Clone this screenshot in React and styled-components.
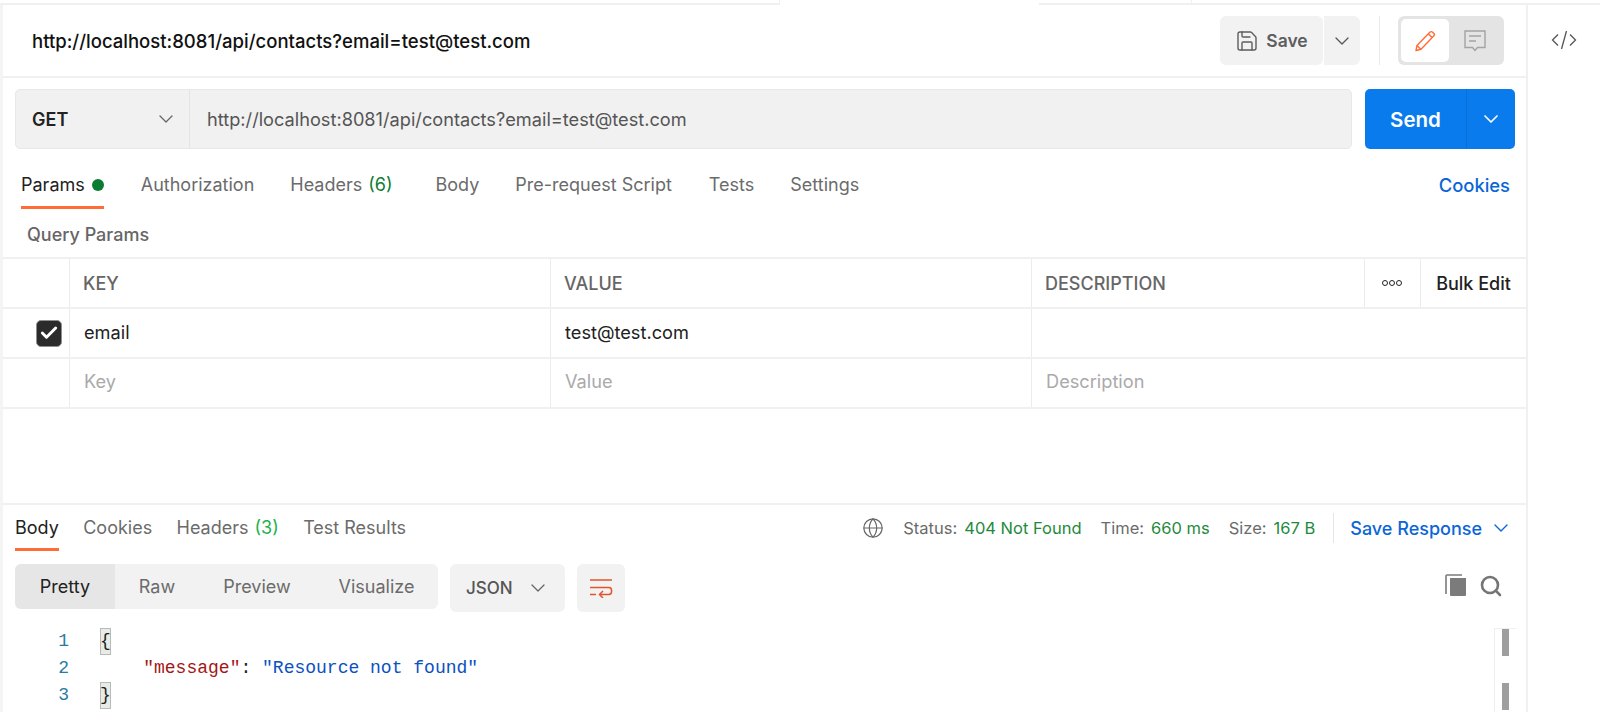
import React from 'react'
import styled, { createGlobalStyle } from 'styled-components'
import { ChevronDown, Globe, Search, Save, Check } from 'lucide-react'

const Global = createGlobalStyle`
  html, body { margin: 0; padding: 0; background: #fff; }
  body { font-family: Inter, "Noto Sans", sans-serif; color: #212121; }
  * { box-sizing: border-box; }
`

const line = '#f0f0f0'

const Page = styled.div`
  width: 1600px;
  height: 712px;
  display: flex;
  flex-direction: column;
  overflow: hidden;
`

const TabStrip = styled.div`
  height: 5px;
  display: flex;
  flex: none;
`

const StripPart = styled.div`
  width: ${(p) => p.$w}px;
  flex: ${(p) => (p.$w ? 'none' : 1)};
  border-bottom: ${(p) => (p.$open ? 'none' : `2px solid ${line}`)};
  border-right: ${(p) => (p.$edge ? `1px solid ${line}` : 'none')};
`

const Workspace = styled.div`
  flex: 1;
  display: flex;
  min-height: 0;
`

const Main = styled.div`
  width: 1528px;
  flex: none;
  display: flex;
  flex-direction: column;
  border-left: 3px solid #f4f4f4;
  border-right: 2px solid ${line};
`

const Side = styled.div`
  flex: 1;
  display: flex;
  justify-content: center;
  padding-top: 25px;
  color: #555;
`

const TitleRow = styled.div`
  height: 73px;
  flex: none;
  display: flex;
  align-items: center;
  padding: 0 22px 0 29px;
  border-bottom: 2px solid ${line};
`

const Title = styled.div`
  flex: 1;
  font-size: 18.55px;
  font-weight: 500;
  color: #111;
`

const SaveButton = styled.div`
  width: 103px;
  height: 49px;
  display: flex;
  align-items: center;
  justify-content: center;
  gap: 7px;
  background: #f2f2f2;
  border-radius: 6px;
  font-size: 17.5px;
  font-weight: 600;
  color: #5e5e5e;
`

const SaveMenu = styled.div`
  width: 36px;
  height: 49px;
  margin-left: 1px;
  display: flex;
  align-items: center;
  justify-content: center;
  background: #f2f2f2;
  border-radius: 0 6px 6px 0;
  color: #555;
`

const ToolDivider = styled.div`
  width: 1px;
  height: 49px;
  margin: 0 18px 0 19px;
  background: #ebebeb;
`

const Toggle = styled.div`
  width: 106px;
  height: 49px;
  padding: 3px;
  display: flex;
  background: #e4e4e4;
  border-radius: 6px;
`

const ToggleItem = styled.div`
  width: ${(p) => (p.$on ? 48 : 52)}px;
  display: flex;
  align-items: center;
  justify-content: center;
  background: ${(p) => (p.$on ? '#fff' : 'transparent')};
  border-radius: 5px;
`

const RequestRow = styled.div`
  display: flex;
  padding: 11px 11px 0 12px;
  flex: none;
`

const UrlBox = styled.div`
  width: 1337px;
  height: 60px;
  flex: none;
  display: flex;
  background: #f1f1f1;
  border: 1px solid #e8e8e8;
  border-radius: 5px;
`

const Method = styled.div`
  width: 174px;
  padding: 0 11px 0 16px;
  display: flex;
  align-items: center;
  justify-content: space-between;
  border-right: 1px solid #e4e4e4;
  font-size: 18px;
  font-weight: 600;
  color: #222;
`

const UrlText = styled.div`
  padding-left: 17px;
  display: flex;
  align-items: center;
  font-size: 18.2px;
  color: #555;
`

const SendButton = styled.div`
  width: 150px;
  height: 60px;
  flex: none;
  margin-left: 13px;
  display: flex;
  background: #097bed;
  border-radius: 5px;
  color: #fff;
`

const SendLabel = styled.div`
  width: 102px;
  display: flex;
  align-items: center;
  justify-content: center;
  font-size: 20.5px;
  font-weight: 600;
  border-right: 1px solid #0a6fd4;
`

const SendMenu = styled.div`
  flex: 1;
  display: flex;
  align-items: center;
  justify-content: center;
`

const RequestTabs = styled.div`
  height: 58px;
  flex: none;
  display: flex;
  align-items: flex-start;
  padding: 21px 16px 0 18px;
`

const RequestTab = styled.div`
  position: relative;
  margin-right: ${(p) => p.$gap}px;
  height: 39px;
  display: flex;
  align-items: flex-start;
  font-size: 18px;
  line-height: 30px;
  color: ${(p) => (p.$active ? '#212121' : '#6b6b6b')};
  &::after {
    content: '';
    display: ${(p) => (p.$active ? 'block' : 'none')};
    position: absolute;
    left: 0;
    right: 0;
    bottom: 0;
    height: 3px;
    background: #ff6c37;
  }
`

const GreenDot = styled.span`
  width: 12px;
  height: 12px;
  margin: 9px 0 0 7px;
  border-radius: 50%;
  background: #0a7d33;
`

const Count = styled.span`
  margin-left: 6px;
  color: ${(p) => p.$color};
`

const CookiesLink = styled.div`
  margin-left: auto;
  line-height: 30px;
  font-size: 18.4px;
  font-weight: 500;
  color: #0a66d8;
`

const SectionLabel = styled.div`
  height: 50px;
  flex: none;
  padding: 17px 0 0 24px;
  font-size: 18px;
  font-weight: 500;
  color: #666;
`

const Row = styled.div`
  height: 50px;
  flex: none;
  display: grid;
  grid-template-columns: 67px 481px 481px 1fr;
  border-top: 2px solid ${line};
`

const LastLine = styled.div`
  height: 2px;
  flex: none;
  background: ${line};
`

const Cell = styled.div`
  display: flex;
  align-items: center;
  padding-left: ${(p) => p.$pad ?? 13}px;
  padding-bottom: ${(p) => p.$lift ?? 0}px;
  border-right: ${(p) => (p.$last ? 'none' : `1px solid #ececec`)};
  font-size: ${(p) => (p.$head ? 18 : 18.2)}px;
  font-weight: ${(p) => (p.$head ? 500 : 400)};
  color: ${(p) => (p.$head ? '#666' : p.$ghost ? '#aaa' : '#212121')};
`

const DescCell = styled.div`
  display: grid;
  grid-template-columns: 333px 56px 1fr;
`

const CheckBox = styled.span`
  width: 26px;
  height: 27px;
  display: flex;
  align-items: center;
  justify-content: center;
  background: #2b2b2b;
  border: 1px solid #8f8f8f;
  border-radius: 5px;
  color: #fff;
`

const Dots = styled.div`
  display: flex;
  gap: 1px;
  justify-content: center;
  align-items: center;
  padding-right: 2px;
  border-right: 1px solid #ececec;
`

const Dot = styled.span`
  width: 6px;
  height: 6px;
  border: 1.5px solid #222;
  border-radius: 50%;
`

const BulkEdit = styled.div`
  display: flex;
  align-items: center;
  justify-content: center;
  font-size: 18px;
  font-weight: 500;
  white-space: nowrap;
  color: #212121;
`

const Spacer = styled.div`
  height: 94px;
  flex: none;
`

const Response = styled.div`
  flex: 1;
  display: flex;
  flex-direction: column;
  border-top: 2px solid ${line};
  min-height: 0;
`

const ResponseBar = styled.div`
  height: 46px;
  flex: none;
  display: flex;
  align-items: flex-start;
  padding: 10px 13px 0 12px;
`

const ResponseTab = styled.div`
  position: relative;
  height: 36px;
  margin-right: 24.4px;
  font-size: 18px;
  line-height: 26px;
  color: ${(p) => (p.$active ? '#212121' : '#6b6b6b')};
  &::after {
    content: '';
    display: ${(p) => (p.$active ? 'block' : 'none')};
    position: absolute;
    left: 0;
    right: 0;
    bottom: 0;
    height: 3px;
    background: #ff6c37;
  }
`

const Stats = styled.div`
  margin-left: auto;
  margin-top: -2px;
  display: flex;
  align-items: center;
  height: 30px;
  font-size: 16.5px;
  color: #6b6b6b;
`

const Stat = styled.span`
  margin-left: ${(p) => p.$gap}px;
  b {
    font-weight: 400;
    color: #1f8a3d;
    margin-left: 7px;
  }
`

const StatDivider = styled.div`
  width: 1px;
  height: 30px;
  margin: 0 16px 0 18px;
  background: #e6e6e6;
`

const SaveResponse = styled.div`
  display: flex;
  align-items: center;
  gap: 7px;
  font-size: 18px;
  font-weight: 500;
  color: #0a66d8;
`

const ResponseTools = styled.div`
  height: 50px;
  flex: none;
  margin-top: 13px;
  display: flex;
  align-items: flex-start;
  padding: 0 0 0 12px;
`

const Segmented = styled.div`
  width: 423px;
  height: 45px;
  display: flex;
  background: #f2f2f2;
  border-radius: 6px;
  overflow: hidden;
`

const Segment = styled.div`
  width: ${(p) => p.$w}px;
  display: flex;
  align-items: center;
  justify-content: center;
  font-size: 18px;
  background: ${(p) => (p.$active ? '#e6e6e6' : 'transparent')};
  color: ${(p) => (p.$active ? '#212121' : '#6b6b6b')};
`

const FormatSelect = styled.div`
  width: 115px;
  height: 48px;
  margin-left: 12px;
  padding: 0 15px 0 16px;
  display: flex;
  align-items: center;
  justify-content: space-between;
  background: #f2f2f2;
  border-radius: 6px;
  font-size: 17px;
  font-weight: 500;
  color: #555;
`

const WrapButton = styled.div`
  width: 48px;
  height: 48px;
  margin-left: 12px;
  display: flex;
  align-items: center;
  justify-content: center;
  background: #f2f2f2;
  border-radius: 6px;
`

const ToolIcons = styled.div`
  margin-left: auto;
  padding: 10px 23px 0 0;
  display: flex;
  gap: 12px;
  color: #757575;
`

const CodeArea = styled.div`
  flex: 1;
  display: flex;
  position: relative;
  padding-top: 14px;
  font-family: "Liberation Mono", "DejaVu Sans Mono", monospace;
  font-size: 18px;
  line-height: 27px;
`

const Numbers = styled.div`
  width: 71px;
  text-align: right;
  color: #2b7a9f;
  span {
    display: block;
    padding-right: 5px;
  }
`

const Lines = styled.div`
  padding-left: 26px;
`

const CodeLine = styled.div`
  height: 27px;
  white-space: pre;
`

const Brace = styled.span`
  display: inline-block;
  width: 11px;
  height: 27px;
  background: #e8ece6;
  outline: 1px solid #b9b9b9;
  outline-offset: -1px;
  color: #222;
`

const Key = styled.span`
  color: #a31515;
`

const Str = styled.span`
  color: #0b51c1;
`

const Scroll = styled.div`
  position: absolute;
  top: 14px;
  right: 10px;
  width: 22px;
  bottom: 0;
  border-left: 1px solid #efefef;
  border-top: 1px solid #efefef;
`

const ScrollMark = styled.div`
  position: absolute;
  right: 7px;
  top: ${(p) => p.$top}px;
  width: 7px;
  height: 27px;
  background: #9e9e9e;
`

const PenIcon = () => (
  <svg width="24" height="24" viewBox="0 0 24 24" fill="none" stroke="#ff6c37" strokeWidth="1.4" strokeLinejoin="round">
    <path d="M3 21.5l1-5L16.8 3.2c.8-.8 2-.8 2.8 0l1.1 1.1c.8.8.8 2 0 2.8L8 20.3z" />
    <path d="M15.5 5l3.6 3.6" />
    <path d="M4 16.5l3.8 3.8" />
  </svg>
)

const NoteIcon = () => (
  <svg width="22" height="22" viewBox="0 0 22 22" fill="none" stroke="#a3a3a3" strokeWidth="1.4">
    <path d="M1 1h20v16.5h-7.5L11 20.5l-2.5-3H1z" />
    <path d="M5 6h12M5 11h7" />
  </svg>
)

const CodeIcon = () => (
  <svg width="26" height="20" viewBox="0 0 26 20" fill="none" stroke="#555" strokeWidth="1.3">
    <path d="M7 4.5L1.5 10 7 15.5" />
    <path d="M19 4.5L24.5 10 19 15.5" />
    <path d="M15.5 1L10.5 19" />
  </svg>
)

const WrapIcon = () => (
  <svg width="24" height="20" viewBox="0 0 24 20" fill="none" stroke="#e2542c" strokeWidth="1.5">
    <path d="M1 2h22" />
    <path d="M1 9.5h19c3.5 0 3.5 7 0 7h-9" />
    <path d="M14 13l-3.5 3.5L14 20" />
    <path d="M1 16.5h6" />
  </svg>
)

const CopyIcon = () => (
  <svg width="22" height="22" viewBox="0 0 22 22">
    <path d="M5 4h16v17a1 1 0 0 1-1 1H6a1 1 0 0 1-1-1z" fill="#7b7b7b" />
    <path d="M1 20V2a1 1 0 0 1 1-1h15" fill="none" stroke="#7b7b7b" strokeWidth="1.6" />
  </svg>
)

const App = () => (
  <>
    <Global />
    <Page>
      <TabStrip>
        <StripPart $w={780} $edge />
        <StripPart $w={259} $open />
        <StripPart $w={153} $edge />
        <StripPart />
      </TabStrip>
      <Workspace>
        <Main>
          <TitleRow>
            <Title>http://localhost:8081/api/contacts?email=test@test.com</Title>
            <SaveButton>
              <Save size={24} strokeWidth={1.4} />
              Save
            </SaveButton>
            <SaveMenu>
              <ChevronDown size={24} strokeWidth={1.3} />
            </SaveMenu>
            <ToolDivider />
            <Toggle>
              <ToggleItem $on>
                <PenIcon />
              </ToggleItem>
              <ToggleItem>
                <NoteIcon />
              </ToggleItem>
            </Toggle>
          </TitleRow>
          <RequestRow>
            <UrlBox>
              <Method>
                GET
                <ChevronDown size={24} strokeWidth={1.3} color="#666" />
              </Method>
              <UrlText>http://localhost:8081/api/contacts?email=test@test.com</UrlText>
            </UrlBox>
            <SendButton>
              <SendLabel>Send</SendLabel>
              <SendMenu>
                <ChevronDown size={24} strokeWidth={1.7} />
              </SendMenu>
            </SendButton>
          </RequestRow>
          <RequestTabs>
            <RequestTab $active $gap={37}>
              Params
              <GreenDot />
            </RequestTab>
            <RequestTab $gap={36}>Authorization</RequestTab>
            <RequestTab $gap={43}>
              Headers
              <Count $color="#0a7d33">(6)</Count>
            </RequestTab>
            <RequestTab $gap={36}>Body</RequestTab>
            <RequestTab $gap={37}>Pre-request Script</RequestTab>
            <RequestTab $gap={36}>Tests</RequestTab>
            <RequestTab $gap={0}>Settings</RequestTab>
            <CookiesLink>Cookies</CookiesLink>
          </RequestTabs>
          <SectionLabel>Query Params</SectionLabel>
          <Row>
            <Cell />
            <Cell $head>KEY</Cell>
            <Cell $head>VALUE</Cell>
            <DescCell>
              <Cell $head>DESCRIPTION</Cell>
              <Dots>
                <Dot />
                <Dot />
                <Dot />
              </Dots>
              <BulkEdit>Bulk Edit</BulkEdit>
            </DescCell>
          </Row>
          <Row>
            <Cell $pad={33}>
              <CheckBox>
                <Check size={20} strokeWidth={3.5} />
              </CheckBox>
            </Cell>
            <Cell $pad={14} $lift={3}>
              email
            </Cell>
            <Cell $pad={14} $lift={3}>
              test@test.com
            </Cell>
            <Cell $last />
          </Row>
          <Row>
            <Cell />
            <Cell $pad={14} $ghost $lift={5}>
              Key
            </Cell>
            <Cell $pad={14} $ghost $lift={5}>
              Value
            </Cell>
            <Cell $pad={14} $ghost $lift={5} $last>
              Description
            </Cell>
          </Row>
          <LastLine />
          <Spacer />
          <Response>
            <ResponseBar>
              <ResponseTab $active>Body</ResponseTab>
              <ResponseTab>Cookies</ResponseTab>
              <ResponseTab>
                Headers
                <Count $color="#22b14c">(3)</Count>
              </ResponseTab>
              <ResponseTab>Test Results</ResponseTab>
              <Stats>
                <Globe size={22} strokeWidth={1.3} color="#666" />
                <Stat $gap={19}>
                  Status:<b>404 Not Found</b>
                </Stat>
                <Stat $gap={19}>
                  Time:<b>660 ms</b>
                </Stat>
                <Stat $gap={19}>
                  Size:<b>167 B</b>
                </Stat>
                <StatDivider />
                <SaveResponse>
                  Save Response
                  <ChevronDown size={24} strokeWidth={1.4} />
                </SaveResponse>
              </Stats>
            </ResponseBar>
            <ResponseTools>
              <Segmented>
                <Segment $active $w={100}>
                  Pretty
                </Segment>
                <Segment $w={84}>Raw</Segment>
                <Segment $w={116}>Preview</Segment>
                <Segment $w={123}>Visualize</Segment>
              </Segmented>
              <FormatSelect>
                JSON
                <ChevronDown size={24} strokeWidth={1.3} color="#666" />
              </FormatSelect>
              <WrapButton>
                <WrapIcon />
              </WrapButton>
              <ToolIcons>
                <CopyIcon />
                <Search size={24} strokeWidth={2.6} />
              </ToolIcons>
            </ResponseTools>
            <CodeArea>
              <Numbers>
                <span>1</span>
                <span>2</span>
                <span>3</span>
              </Numbers>
              <Lines>
                <CodeLine>
                  <Brace>{'{'}</Brace>
                </CodeLine>
                <CodeLine>
                  {'    '}
                  <Key>"message"</Key>: <Str>"Resource not found"</Str>
                </CodeLine>
                <CodeLine>
                  <Brace>{'}'}</Brace>
                </CodeLine>
              </Lines>
              <Scroll>
                <ScrollMark $top={0} />
                <ScrollMark $top={54} />
              </Scroll>
            </CodeArea>
          </Response>
        </Main>
        <Side>
          <CodeIcon />
        </Side>
      </Workspace>
    </Page>
  </>
)

export default App
